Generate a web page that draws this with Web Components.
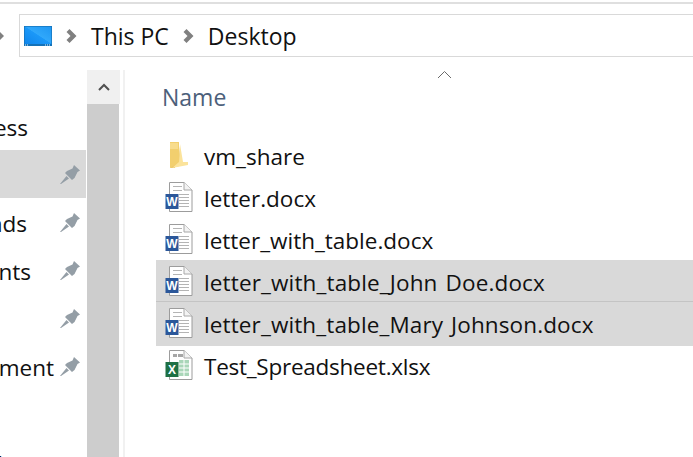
<!DOCTYPE html>
<html>
<head>
<meta charset="utf-8">
<title>Desktop</title>
<style>
  html, body { margin: 0; height: 100%; background: #fff; overflow: hidden; }
  body { font-family: "Open Sans", "Noto Sans", sans-serif; color: #111; }
</style>
</head>
<body>
<explorer-window>
  <address-bar slot="address"></address-bar>
  <nav-pane slot="nav">
    <nav-item end="28">ess</nav-item>
    <nav-item pin selected></nav-item>
    <nav-item end="27" pin>nds</nav-item>
    <nav-item end="31" pin>nts</nav-item>
    <nav-item pin></nav-item>
    <nav-item end="54" pin>ment</nav-item>
    <nav-item></nav-item>
    <nav-item end="3">l</nav-item>
  </nav-pane>
  <side-scrollbar slot="scroll"></side-scrollbar>
  <file-list slot="files">
    <file-row kind="folder">vm_share</file-row>
    <file-row kind="word">letter.docx</file-row>
    <file-row kind="word">letter_with_table.docx</file-row>
    <file-row kind="word" selected style="letter-spacing: 0.14px">letter_with_table_John Doe.docx</file-row>
    <file-row kind="word" selected last style="letter-spacing: 0.12px">letter_with_table_Mary Johnson.docx</file-row>
    <file-row kind="excel" style="letter-spacing: -0.25px">Test_Spreadsheet.xlsx</file-row>
  </file-list>
</explorer-window>

<script>
/**
 * Outer frame: toolbar rule, address bar, then the three panes.
 */
customElements.define('explorer-window', class extends HTMLElement {
  constructor () {
    super()
    this.attachShadow({ mode: 'open' }).innerHTML = `
      <style>
        :host { display: flex; flex-direction: column; height: 457px; overflow: hidden; }
        .rule { height: 2px; margin-top: 2px; background: #dfdfdf; flex: none; }
        .top { padding: 10px 0 13px 19px; flex: none; }
        .panes { display: grid; grid-template-columns: 87px 33px 1fr; flex: 1; min-height: 0; }
      </style>
      <div class="rule"></div>
      <div class="top"><slot name="address"></slot></div>
      <div class="panes">
        <slot name="nav"></slot>
        <slot name="scroll"></slot>
        <slot name="files"></slot>
      </div>
    `
  }
})

customElements.define('address-bar', class extends HTMLElement {
  constructor () {
    super()
    const chevron = `<svg class="chev" width="11" height="14" viewBox="0 0 11 14"><path d="M0.5 3 L3.5 0 L10.5 7 L3.5 14 L0.5 11 L4.5 7 Z" fill="#808080"/></svg>`
    this.attachShadow({ mode: 'open' }).innerHTML = `
      <style>
        :host { display: block; position: relative; }
        .bar {
          display: flex; align-items: center; height: 41px;
          border: 1px solid #d9d9d9; border-right: 0; font-size: 23px; color: #111; padding-left: 4px;
        }
        .pc { margin: 0 14px 0 0; display: block; }
        .chev { flex: none; }
        .crumb { margin: 2px 14px 0; line-height: 41px; white-space: nowrap; }
        .back { position: absolute; left: -19px; top: 18px; }
      </style>
      <svg class="back" width="4" height="8" viewBox="0 0 4 8"><path d="M0 0 L4 4 L0 8 Z" fill="#808080"/></svg>
      <div class="bar">
        <svg class="pc" width="28" height="20" viewBox="0 0 28 20">
          <defs><linearGradient id="d" x1="0" y1="1" x2="1" y2="0">
            <stop offset="0" stop-color="#0f86ec"/><stop offset="0.5" stop-color="#1b98f8"/><stop offset="0.52" stop-color="#30a8fb"/><stop offset="1" stop-color="#1f97f2"/>
          </linearGradient></defs>
          <rect x="0" y="0" width="28" height="20" fill="#1472b8"/>
          <rect x="0.7" y="0.7" width="26.6" height="17.3" fill="url(#d)"/>
          <path d="M1 19 H4 M21 19 H27" stroke="#dff2ff" stroke-width="1" stroke-dasharray="1 1"/>
        </svg>
        ${chevron}<span class="crumb">This PC</span>${chevron}<span class="crumb">Desktop</span>
      </div>
    `
  }
})

customElements.define('nav-pane', class extends HTMLElement {
  constructor () {
    super()
    this.attachShadow({ mode: 'open' }).innerHTML = `
      <style>
        :host { display: block; padding-top: 32px; overflow: hidden; }
      </style>
      <slot></slot>
    `
  }
})

/**
 * Sidebar row. The pane is scrolled sideways, so only the tail of each label
 * shows: "end" is where that tail stops, counted from the left edge.
 */
customElements.define('nav-item', class extends HTMLElement {
  constructor () {
    super()
    const end = Number(this.getAttribute('end') || 0)
    const pin = this.hasAttribute('pin')
      ? `<svg class="pin" width="20" height="19" viewBox="0 0 20 19"><path d="M14 0 L20 5.5 L17.5 7 L14.5 13 L12 15 L5 8 L7 6 L12.5 3.5 Z M6.5 11 L9 13.5 L1 19 L0 19 Z" fill="#949ea6"/></svg>`
      : ''
    this.attachShadow({ mode: 'open' }).innerHTML = `
      <style>
        :host { display: block; position: relative; height: 48px; font-size: 22.5px; color: #111; }
        :host([selected]) { background: #d9d9d9; margin-right: 1px; }
        .label { display: flex; justify-content: flex-end; width: ${end}px; height: 48px; line-height: 51px; white-space: nowrap; }
        .pin { position: absolute; left: 60px; top: 15px; }
      </style>
      <span class="label"><slot></slot></span>
      ${pin}
    `
  }
})

customElements.define('side-scrollbar', class extends HTMLElement {
  constructor () {
    super()
    this.attachShadow({ mode: 'open' }).innerHTML = `
      <style>
        :host { display: flex; flex-direction: column; width: 33px; }
        .up { height: 34px; background: #f0f0f0; display: flex; align-items: center; justify-content: center; }
        .thumb { flex: 1; background: #cdcdcd; margin-right: 1px; }
      </style>
      <div class="up"><svg width="12" height="8" viewBox="0 0 12 8"><path d="M1 7 L6 2 L11 7" fill="none" stroke="#505050" stroke-width="2"/></svg></div>
      <div class="thumb"></div>
    `
  }
})

customElements.define('file-list', class extends HTMLElement {
  constructor () {
    super()
    this.attachShadow({ mode: 'open' }).innerHTML = `
      <style>
        :host { display: block; position: relative; border-left: 2px solid #f1f1f1; margin-left: 3px; padding-left: 31px; }
        .sort { position: absolute; left: 312px; top: 0; }
        .head { height: 64px; padding-left: 6px; font-size: 23px; line-height: 54px; color: #4c607a; }
      </style>
      <svg class="sort" width="15" height="9" viewBox="0 0 15 9"><path d="M1 8 L7.5 1.5 L14 8" fill="none" stroke="#6a6a6a" stroke-width="1"/></svg>
      <div class="head">Name</div>
      <slot></slot>
    `
  }
})

const ICONS = {
  folder: `<svg width="20" height="28" viewBox="0 0 20 28">
    <path d="M1 1 L10 1 L10 6 L10 24 L1 27 Z" fill="#f2cf6e"/>
    <path d="M1 2 L9 2 L9 8 L1 8 Z" fill="#f8dc8c"/>
    <path d="M10 5 L12 23 L18 23 L19 23 L6 26 L6 27 L1 27 L10 22 Z" fill="#e9c466"/>
    <path d="M11 3 L14 21 L19 21 L19 24 L3 27 L10 21 Z" fill="#fbe39b"/>
  </svg>`,
  word: `<svg width="28" height="32" viewBox="0 0 28 32">
    <path d="M4.5 1.5 H19 L27 9 V30.5 H4.5 Z" fill="#fff" stroke="#9c9c9c"/>
    <path d="M19 1.5 V9 H27" fill="#f3f3f3" stroke="#a8a8a8"/>
    <path d="M8 5.5 H17 M8 9.5 H17 M14 13.5 H24 M14 16.5 H24 M14 19.5 H24 M14 22.5 H24 M14 25.5 H24" stroke="#b4b4b4"/>
    <rect x="0.5" y="13" width="13" height="15" fill="#2b579a"/>
    <text x="7" y="25" text-anchor="middle" font-family="Liberation Sans" font-weight="700" font-size="12" fill="#fff">W</text>
  </svg>`,
  excel: `<svg width="28" height="32" viewBox="0 0 28 32">
    <path d="M4.5 1.5 H19 L27 9 V30.5 H4.5 Z" fill="#fff" stroke="#9c9c9c"/>
    <path d="M19 1.5 V9 H27" fill="#f3f3f3" stroke="#a8a8a8"/>
    <rect x="8" y="5" width="4" height="3" fill="#a6a6a6"/><rect x="13" y="5" width="5" height="3" fill="#a6a6a6"/>
    <path d="M14 11 H24 V27 H14 Z" fill="#a9d6b8"/>
    <path d="M14 15 H24 M14 19 H24 M14 23 H24 M19 11 V27" stroke="#fff"/>
    <rect x="0.5" y="13" width="13" height="15" fill="#1d7044"/>
    <text x="7" y="25" text-anchor="middle" font-family="Liberation Sans" font-weight="700" font-size="12" fill="#fff">X</text>
  </svg>`
}

customElements.define('file-row', class extends HTMLElement {
  constructor () {
    super()
    const kind = this.getAttribute('kind')
    this.attachShadow({ mode: 'open' }).innerHTML = `
      <style>
        :host { display: flex; align-items: center; height: 42px; position: relative; font-size: 22.5px; word-spacing: 2px; white-space: nowrap; color: #111; }
        :host([selected]) { background: #d9d9d9; box-shadow: inset 0 -1px #c4c4c4; }
        :host([last]) { box-shadow: 0 2px #d9d9d9; }
        .icon { width: 46px; margin-right: 2px; flex: none; display: flex; justify-content: center; height: 32px; align-items: center; }
        .name { line-height: 48px; margin-top: 4px; }
      </style>
      <span class="icon">${ICONS[kind]}</span>
      <span class="name"><slot></slot></span>
    `
  }
})
</script>
</body>
</html>
